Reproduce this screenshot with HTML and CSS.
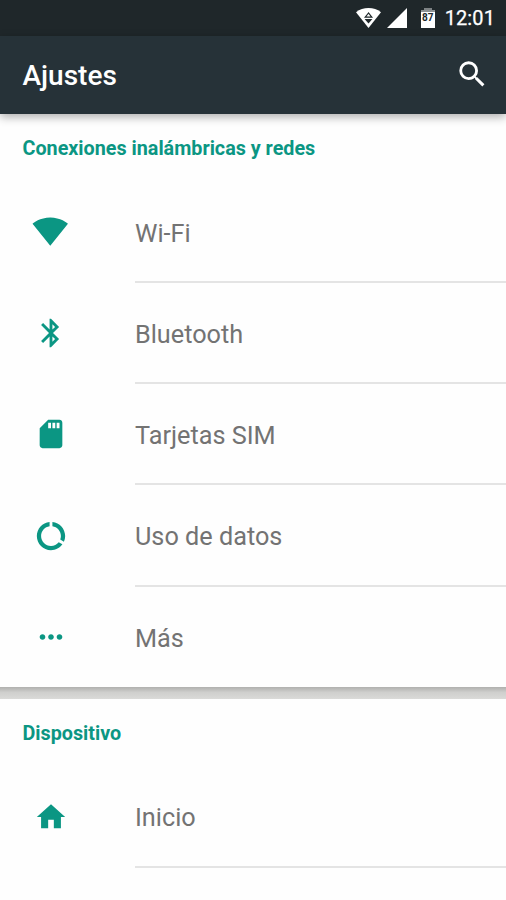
FILE: index.html
```html
<!DOCTYPE html>
<html lang="es">
<head>
<meta charset="utf-8">
<title>Ajustes</title>
<link rel="stylesheet" href="styles.css">
</head>
<body>
<div class="status">
  <svg class="s-wifi" viewBox="0 0 25 20"><path fill="#fff" d="M12.5 20 0 4.200Q5.500 0 12.500 0T25 4.200z"/><path fill="none" stroke="#20282b" stroke-width="1.200" d="M12.500 5 9.200 9.200h6.600z"/><path fill="#20282b" d="M8.600 11h7.800l-3.900 4.600z"/></svg>
  <svg class="s-cell" viewBox="0 0 20 20"><path fill="#fff" d="M20 0v20H0z"/></svg>
  <div class="battery"><span>87</span></div>
  <span class="clock">12:01</span>
</div>
<header class="bar">
  <h1>Ajustes</h1>
  <svg class="search" viewBox="0 0 24 24"><path fill="#fff" d="M15.500 14h-.79l-.28-.27A6.471 6.471 0 0 0 16 9.500 6.500 6.500 0 1 0 9.500 16c1.610 0 3.090-.59 4.230-1.570l.27.28v.79l5 4.990L20.490 19l-4.990-5zm-6 0C7.010 14 5 11.990 5 9.500S7.010 5 9.500 5 14 7.010 14 9.500 11.990 14 9.500 14z"/></svg>
</header>
<main>
  <section class="card">
    <h2>Conexiones inalámbricas y redes</h2>
    <div class="row"><div class="icon"><svg class="wide" viewBox="0 0 24 24"><path d="M12.010 21.490 23.640 7c-.45-.34-4.930-4-11.640-4C5.280 3 .81 6.660.36 7l11.630 14.490.01.01.01-.01z"/></svg></div><div class="label">Wi-Fi</div></div>
    <div class="row"><div class="icon"><svg viewBox="0 0 24 24"><path d="M17.710 7.710 12 2h-1v7.590L6.410 5 5 6.410 10.590 12 5 17.590 6.410 19 11 14.410V22h1l5.710-5.710-4.300-4.290 4.300-4.290zM13 5.830l1.880 1.880L13 9.590V5.830zm1.880 10.460L13 18.170v-3.760l1.880 1.880z"/></svg></div><div class="label">Bluetooth</div></div>
    <div class="row"><div class="icon"><svg viewBox="0 0 24 24"><path d="M18 2h-8L4.020 8 4 20c0 1.100.9 2 2 2h12c1.100 0 2-.9 2-2V4c0-1.100-.9-2-2-2zm-6 6h-2V4h2v4zm3 0h-2V4h2v4zm3 0h-2V4h2v4z"/></svg></div><div class="label">Tarjetas SIM</div></div>
    <div class="row"><div class="icon"><svg viewBox="0 0 24 24"><path d="M13 2.050v3.030c3.390.49 6 3.390 6 6.920 0 .9-.18 1.750-.48 2.540l2.600 1.530c.56-1.240.88-2.620.88-4.070 0-5.180-3.950-9.450-9-9.950zM12 19c-3.870 0-7-3.130-7-7 0-3.530 2.610-6.430 6-6.920V2.050c-5.060.5-9 4.760-9 9.950 0 5.520 4.470 10 9.990 10 3.310 0 6.240-1.610 8.060-4.090l-2.600-1.530A6.950 6.950 0 0 1 12 19z"/></svg></div><div class="label">Uso de datos</div></div>
    <div class="row"><div class="icon"><svg viewBox="0 0 24 24"><path d="M6 10c-1.100 0-2 .9-2 2s.9 2 2 2 2-.9 2-2-.9-2-2-2zm12 0c-1.100 0-2 .9-2 2s.9 2 2 2 2-.9 2-2-.9-2-2-2zm-6 0c-1.100 0-2 .9-2 2s.9 2 2 2 2-.9 2-2-.9-2-2-2z"/></svg></div><div class="label last">Más</div></div>
  </section>
  <div class="gap"></div>
  <section class="card">
    <h2>Dispositivo</h2>
    <div class="row"><div class="icon"><svg viewBox="0 0 24 24"><path d="M10 20v-6h4v6h5v-8h3L12 3 2 12h3v8z"/></svg></div><div class="label">Inicio</div></div>
  </section>
</main>
</body>
</html>
```
FILE: styles.css
```css
* { box-sizing: border-box; }
body {
  margin: 0;
  height: 900px;
  overflow: hidden;
  background: #fefefe;
  font-family: Roboto, sans-serif;
}
svg { display: block; flex: none; }
.status {
  height: 36px;
  display: flex;
  align-items: center;
  justify-content: flex-end;
  padding-right: 11px;
  background: #1f272a;
  color: #fff;
}
.s-wifi { width: 25px; height: 20px; margin-right: 6px; }
.s-cell { width: 20px; height: 20px; margin-right: 14px; }
.battery {
  width: 14px;
  height: 21px;
  margin-right: 10px;
  padding-top: 1px;
  background: linear-gradient(#7d8284, #7d8284) 50% 0 / 8px 2px no-repeat, linear-gradient(#8d9293 2px, #fff 2px) 0 2px / 14px 18px no-repeat;
  color: #20282b;
  font-size: 10px;
  font-weight: 700;
  line-height: 18px;
  text-align: center;
}
.clock { font-size: 20px; font-weight: 400; line-height: 36px; letter-spacing: .1px; -webkit-text-stroke: .25px #fff; }
.bar {
  position: relative;
  height: 78px;
  display: flex;
  align-items: center;
  justify-content: space-between;
  padding: 0 16.500px 0 22.500px;
  background: #263238;
  color: #fff;
  box-shadow: 0 3px 9px rgba(0, 0, 0, .32);
}
.bar h1 { margin: 0; padding-top: 2px; font-size: 28px; font-weight: 500; line-height: 36px; }
.search { width: 34.500px; height: 34.500px; margin-top: -1px; }
.card h2 {
  margin: 0;
  height: 67.500px;
  padding: 2px 0 0 22.500px;
  color: #0b9683;
  font-size: 19.750px;
  font-weight: 700;
  line-height: 65.500px;
}
.row { height: 101.300px; display: flex; }
.icon { width: 101px; flex: none; margin-right: 34px; display: flex; align-items: center; justify-content: center; padding-bottom: 1px; }
.icon svg { width: 34px; height: 34px; fill: #0b9683; }
.icon .wide { width: 36.500px; height: 36.500px; }
.label {
  flex: 1;
  border-bottom: 2px solid #e4e4e4;
  color: #737373;
  font-size: 25.250px;
  line-height: 103px;
}
.row:has(.last) { height: 100.800px; }
.last { border-bottom: 0; }
.gap { height: 11.500px; background: linear-gradient(#b0b0ae, #cfcfcd 45%, #dadad8); }
```
